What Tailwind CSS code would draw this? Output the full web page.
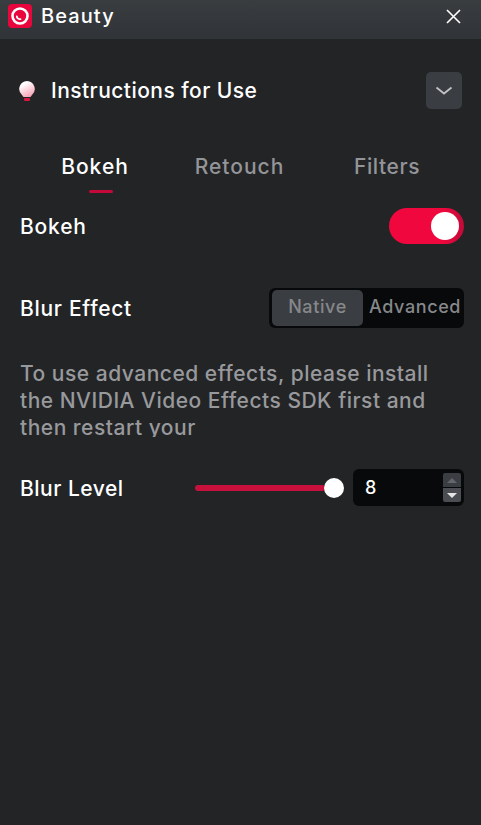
<!DOCTYPE html>
<html lang="en">
  <head>
    <meta charset="UTF-8">
    <title>Beauty</title>
    <script src="https://cdn.jsdelivr.net/npm/@tailwindcss/browser@4"></script>
  </head>
  <body class="bg-[#232426] font-['Inter','Liberation_Sans',sans-serif] text-white">
    <div class="w-[481px] h-[825px] overflow-hidden">
      <!-- title bar -->
      <header class="h-[39px] flex items-center bg-linear-to-b from-[#3a3d40] to-[#303337] pl-2 pr-5 pb-[7px]">
        <div class="w-6 h-6 rounded-[4px] bg-[#e8063c] flex items-center justify-center">
          <svg width="20" height="20" viewBox="0 0 20 20" fill="none">
            <circle cx="10" cy="10" r="7.500" stroke="#fff" stroke-width="2.600"/>
            <path d="M6.800 10.500a3.200 3.200 0 0 0 3.700 2.700" stroke="#fff" stroke-width="1.800" stroke-linecap="round"/>
          </svg>
        </div>
        <span class="ml-[9px] text-[20px] font-medium tracking-[1.1px]">Beauty</span>
        <svg class="ml-auto" width="15" height="15" viewBox="0 0 15 15" fill="none">
          <path d="M1 1l13 13M14 1L1 14" stroke="#fff" stroke-width="1.600"/>
        </svg>
      </header>

      <!-- instructions -->
      <div class="mt-[33px] h-[37px] flex items-center pl-[18px] pr-[19px]">
        <svg width="18" height="22" viewBox="0 0 18 22">
          <defs>
            <linearGradient id="bulb" x1="0.2" y1="0" x2="0.7" y2="1">
              <stop offset="0.2" stop-color="#ffffff"/>
              <stop offset="1" stop-color="#f7a0b2"/>
            </linearGradient>
          </defs>
          <path d="M9 1a8 8 0 0 0-5 14l1.500 2h7l1.500-2A8 8 0 0 0 9 1z" fill="url(#bulb)"/>
          <rect x="6" y="18" width="6" height="3" rx="1" fill="#d8173f"/>
        </svg>
        <span class="ml-[15px] text-[21px] font-medium tracking-[0.45px]">Instructions for Use</span>
        <button class="ml-auto w-9 h-[37px] rounded-[5px] bg-[#3a3d41] flex items-center justify-center">
          <svg width="18" height="10" viewBox="0 0 18 10" fill="none">
            <path d="M1.500 1.500l7.500 6 7.500-6" stroke="#c0c2c4" stroke-width="1.800"/>
          </svg>
        </button>
      </div>

      <!-- tabs -->
      <nav class="mt-[36px] h-[48px] text-[21px] font-medium tracking-[1px] text-[#939598] flex">
        <div class="w-[190px] flex flex-col items-center pt-1.5">
          <span class="text-white">Bokeh</span>
          <span class="mt-[7px] ml-[12px] w-6 h-[3px] bg-[#c4093a] rounded-full"></span>
        </div>
        <div class="w-[99px] text-center pt-1.5">Retouch</div>
        <div class="ml-[65px] pt-1.5 tracking-[0.6px]">Filters</div>
      </nav>

      <!-- bokeh toggle -->
      <div class="mt-[14px] h-[38px] flex items-center justify-between pl-5 pr-[17px]">
        <span class="mt-[2px] text-[21px] font-medium tracking-[0.8px]">Bokeh</span>
        <div class="w-[75px] h-9 rounded-full bg-linear-to-r from-[#f0073d] from-70% to-[#c20a38] flex items-center justify-end pr-[5px]">
          <span class="w-7 h-7 rounded-full bg-white"></span>
        </div>
      </div>

      <!-- blur effect -->
      <div class="mt-[43px] h-10 flex items-center justify-between pl-5 pr-[17px]">
        <span class="mt-[2px] text-[21px] font-medium tracking-[0.7px]">Blur Effect</span>
        <div class="w-[195px] h-10 rounded-[6px] bg-[#08090a] flex items-center pl-[3px] text-[18px] font-medium tracking-[0.6px] text-[#86888b]">
          <span class="w-[91px] h-9 pb-[3px] rounded-[5px] bg-[#3a3d41] flex items-center justify-center">Native</span>
          <span class="ml-[6px] pb-[3px]">Advanced</span>
        </div>
      </div>

      <!-- note -->
      <p class="mt-[32px] ml-5 w-[415px] h-[77px] overflow-hidden text-[21px] leading-[27px] font-medium tracking-[0.5px] text-[#98999c]">To use advanced effects, please install the NVIDIA Video Effects SDK first and then restart your</p>

      <!-- blur level -->
      <div class="mt-[32px] h-[37px] flex items-center pl-5 pr-[17px]">
        <span class="mt-[2px] text-[21px] font-medium tracking-[0.5px]">Blur Level</span>
        <div class="ml-auto w-[149px] flex items-center">
          <span class="w-[130px] h-[6px] rounded-full bg-[#c8103c]"></span>
          <span class="-ml-[1px] w-5 h-5 rounded-full bg-white"></span>
        </div>
        <div class="ml-[9px] w-[111px] h-[37px] rounded-[6px] bg-[#08090a] flex items-center pl-3 pr-[3px] justify-between">
          <span class="text-[18px] font-medium">8</span>
          <div class="flex flex-col gap-px">
            <span class="w-[18px] h-[14px] rounded-t-[2px] bg-[#3a3d41] flex items-center justify-center">
              <svg width="10" height="5" viewBox="0 0 10 5"><path d="M5 0l5 5H0z" fill="#63666a"/></svg>
            </span>
            <span class="w-[18px] h-[14px] rounded-b-[2px] bg-[#4a4d51] flex items-center justify-center">
              <svg width="10" height="5" viewBox="0 0 10 5"><path d="M0 0h10L5 5z" fill="#e4e5e6"/></svg>
            </span>
          </div>
        </div>
      </div>
    </div>
  </body>
</html>
